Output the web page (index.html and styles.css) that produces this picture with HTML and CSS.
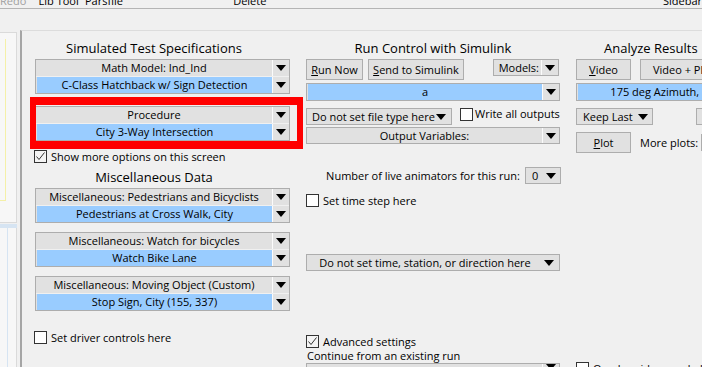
FILE: index.html
```html
<!DOCTYPE html>
<html lang="en">
<head>
    <meta charset="UTF-8">
    <title>Run Screen</title>
    <link rel="stylesheet" href="styles.css">
</head>
<body>
    <div class="menubar">
        <span class="menu-item menu-redo">Redo</span>
        <span class="menu-item menu-lib">Lib Tool</span>
        <span class="menu-item menu-pars">Parsfile</span>
        <span class="menu-item menu-delete">Delete</span>
        <span class="menu-item">Sidebar</span>
    </div>
    <div class="toolbar"></div>

    <div class="workspace">
        <div class="side-panel">
            <div class="side-top"><div class="side-note"></div></div>
            <div class="side-split"></div>
            <div class="side-bottom"></div>
        </div>

        <div class="main">
            <!-- Simulated test specifications -->
            <section class="col col-spec">
                <h2 class="col-title">Simulated Test Specifications</h2>
                <div class="stack">
                    <div class="stack-row"><span class="stack-text">Math Model: Ind_Ind</span><span class="arrow-cell"><i class="arrow"></i></span></div>
                    <div class="stack-row value"><span class="stack-text">C-Class Hatchback w/ Sign Detection</span><span class="arrow-cell"><i class="arrow"></i></span></div>
                </div>
                <div class="highlight">
                    <div class="stack">
                        <div class="stack-row"><span class="stack-text">Procedure</span><span class="arrow-cell"><i class="arrow"></i></span></div>
                        <div class="stack-row value"><span class="stack-text">City 3-Way Intersection</span><span class="arrow-cell"><i class="arrow"></i></span></div>
                    </div>
                </div>
                <label class="check check-more">
                    <span class="box on"><svg width="11" height="11" viewBox="0 0 11 11"><polyline points="1.5,5.5 4,8.5 9.5,1.5" fill="none" stroke="#333" stroke-width="1"/></svg></span>
                    Show more options on this screen
                </label>

                <h2 class="col-title misc-title">Miscellaneous Data</h2>
                <div class="stack">
                    <div class="stack-row"><span class="stack-text">Miscellaneous: Pedestrians and Bicyclists</span><span class="arrow-cell"><i class="arrow"></i></span></div>
                    <div class="stack-row value"><span class="stack-text">Pedestrians at Cross Walk, City</span><span class="arrow-cell"><i class="arrow"></i></span></div>
                </div>
                <div class="stack misc">
                    <div class="stack-row"><span class="stack-text">Miscellaneous: Watch for bicycles</span><span class="arrow-cell"><i class="arrow"></i></span></div>
                    <div class="stack-row value"><span class="stack-text">Watch Bike Lane</span><span class="arrow-cell"><i class="arrow"></i></span></div>
                </div>
                <div class="stack misc">
                    <div class="stack-row"><span class="stack-text">Miscellaneous: Moving Object (Custom)</span><span class="arrow-cell"><i class="arrow"></i></span></div>
                    <div class="stack-row value"><span class="stack-text">Stop Sign, City (155, 337)</span><span class="arrow-cell"><i class="arrow"></i></span></div>
                </div>
                <label class="check check-driver"><span class="box"></span>Set driver controls here</label>
            </section>

            <!-- Run control -->
            <section class="col col-run">
                <h2 class="col-title">Run Control with Simulink</h2>
                <div class="button-row">
                    <button class="btn btn-run"><u>R</u>un Now</button>
                    <button class="btn btn-send"><u>S</u>end to Simulink</button>
                    <div class="split models"><span class="split-text">Models:</span><span class="arrow-cell"><i class="arrow"></i></span></div>
                </div>
                <div class="split value tall model-pick"><span class="split-text">a</span><span class="arrow-cell"><i class="arrow"></i></span></div>
                <div class="file-row">
                    <div class="drop file-type"><span>Do not set file type here</span><i class="arrow"></i></div>
                    <label class="check check-write"><span class="box"></span>Write all outputs</label>
                </div>
                <div class="split outputs"><span class="split-text">Output Variables:</span><span class="arrow-cell"><i class="arrow"></i></span></div>
                <div class="live-row">
                    <span>Number of live animators for this run:</span>
                    <div class="drop live-count"><span>0</span><i class="arrow"></i></div>
                </div>
                <label class="check check-step"><span class="box"></span>Set time step here</label>
                <div class="drop centered time-drop"><span>Do not set time, station, or direction here</span><i class="arrow"></i></div>
                <label class="check check-adv">
                    <span class="box on"><svg width="11" height="11" viewBox="0 0 11 11"><polyline points="1.5,5.5 4,8.5 9.5,1.5" fill="none" stroke="#333" stroke-width="1"/></svg></span>
                    Advanced settings
                </label>
                <div class="continue">Continue from an existing run</div>
                <div class="split continue-pick"><span class="split-text"></span><span class="arrow-cell"><i class="arrow"></i></span></div>
            </section>

            <!-- Analyze results -->
            <section class="col col-analyze">
                <h2 class="col-title analyze-title">Analyze Results</h2>
                <div class="button-row">
                    <button class="btn btn-video"><u>V</u>ideo</button>
                    <button class="btn btn-video-plot">Video + Plots</button>
                </div>
                <div class="split value tall view-pick"><span class="split-text">175 deg Azimuth, 5 deg Elevation</span><span class="arrow-cell"><i class="arrow"></i></span></div>
                <div class="keep-row">
                    <div class="drop keep-last"><span>Keep Last</span><i class="arrow"></i></div>
                    <div class="drop keep-extra"><span></span></div>
                </div>
                <div class="plot-row">
                    <button class="btn btn-plot"><u>P</u>lot</button>
                    <span>More plots:</span>
                    <div class="drop more-plots"><span></span></div>
                </div>
                <label class="check check-overlay"><span class="box"></span>Overlay videos and plots</label>
            </section>
        </div>
    </div>
</body>
</html>
```

FILE: styles.css
```css
/* Windows-style run screen */
body {
    margin: 0;
    width: 702px;
    height: 367px;
    overflow: hidden;
    background-color: #f0f0f0;
    font-family: "Open Sans", "Noto Sans", sans-serif;
    font-size: 11px;
    color: #000;
}

/* menu strip, scrolled so only the bottom of the labels shows */
.menubar {
    display: flex;
    height: 8px;
    overflow: hidden;
    border-bottom: 1px solid #b4b4b4;
}

.menu-item {
    line-height: 12px;
    margin-top: -5px;
    white-space: nowrap;
}

.menu-redo { width: 39px; color: #a0a0a0; }
.menu-lib { width: 47px; }
.menu-pars { width: 150px; }
.menu-delete { width: 435px; }

.toolbar {
    height: 21px;
}

.workspace {
    display: flex;
    height: 337px;
}

/* left list panels */
.side-panel {
    width: 17px;
    margin-right: 3px;
    padding-top: 2px;
    display: flex;
    flex-direction: column;
}

.side-top {
    height: 183px;
    background-color: #f7f7f7;
    border: 1px solid #dadada;
    border-left: 0;
    padding-top: 6px;
}

.side-note {
    width: 5px;
    height: 161px;
    border-right: 1px solid #f4f0a8;
    border-bottom: 1px solid #f4f0a8;
}

.side-split {
    height: 4px;
    margin-top: 1px;
    background-color: #d6e4f2;
}

.side-bottom {
    flex: 1;
    background-color: #f7f7f7;
    border-right: 1px solid #dadada;
}

.side-bottom::before {
    content: "";
    display: block;
    width: 7px;
    height: 100%;
    border-right: 1px solid #d6e4f2;
}

.main {
    flex: 1;
    display: flex;
    gap: 16px;
    padding: 7px 0 0 13px;
    border-left: 2px solid #a5a5a5;
    border-top: 1px solid #dcdcdc;
    overflow: hidden;
}

.col {
    flex: none;
    display: flex;
    flex-direction: column;
    align-items: stretch;
}

.col-spec { width: 255px; }
.col-run { width: 254px; }
.col-analyze { width: 254px; }

.col-title {
    margin: 0 0 1px;
    height: 20px;
    line-height: 20px;
    font-size: 13px;
    font-weight: normal;
    text-align: center;
    white-space: nowrap;
}

.col-spec .col-title {
    padding-right: 17px;
}

.analyze-title {
    text-align: left;
    padding-left: 28px;
}

/* two-row combo: caption row over value row */
.stack {
    border: 1px solid #adadad;
    background-color: #e1e1e1;
}

.stack-row {
    display: flex;
    height: 16px;
}

.stack-row + .stack-row {
    border-top: 1px solid #f0f0f0;
}

.stack-text {
    flex: 1;
    line-height: 16px;
    text-align: center;
    white-space: nowrap;
    overflow: hidden;
}

.value .stack-text,
.value .split-text {
    background-color: #99ccff;
    margin-left: 1px;
}

.arrow-cell {
    width: 16px;
    flex: none;
    border-left: 1px solid #fbfbfb;
    display: flex;
    align-items: center;
    justify-content: center;
}

.arrow {
    display: block;
    width: 0;
    height: 0;
    border-left: 5px solid transparent;
    border-right: 5px solid transparent;
    border-top: 6px solid #000;
}

.highlight {
    margin: 3px -13px 0 -5px;
    padding: 1px 7px 0 0;
    border-style: solid;
    border-color: #ff0000;
    border-width: 8px 6px;
}

.highlight .stack {
    border-left: 0;
}

.misc {
    margin-top: 9px;
}

/* checkboxes */
.check {
    display: flex;
    align-items: center;
    gap: 4px;
    height: 13px;
    line-height: 13px;
    white-space: nowrap;
}

.box {
    flex: none;
    box-sizing: border-box;
    width: 13px;
    height: 13px;
    border: 1px solid #333;
    background-color: #fff;
    display: flex;
    align-items: center;
    justify-content: center;
}

.box.on {
    background-color: #f4f4f4;
}

.check-more { margin: 1px 0 0 -1px; }
.misc-title { margin-top: 4px; }
.check-driver { margin: 20px 0 0 -1px; }

/* buttons and single-row combos */
.btn {
    height: 21px;
    padding: 0;
    border: 1px solid #adadad;
    background-color: #e1e1e1;
    font-family: inherit;
    font-size: 11px;
    color: #000;
    white-space: nowrap;
}

.button-row {
    display: flex;
    align-items: flex-start;
    gap: 5px;
}

.btn-run { width: 57px; }
.btn-send { width: 96px; }

.split {
    display: flex;
    height: 15px;
    border: 1px solid #adadad;
    background-color: #e1e1e1;
}

.split.tall {
    height: 16px;
}

.split-text {
    flex: 1;
    text-align: center;
    line-height: 15px;
    white-space: nowrap;
    overflow: hidden;
}

.tall .split-text {
    line-height: 16px;
}

.models {
    width: 64px;
    margin-left: auto;
    margin-right: 1px;
}

.models .split-text {
    text-align: right;
    padding-right: 2px;
}

.model-pick { margin-top: 3px; }

.drop {
    display: flex;
    align-items: center;
    justify-content: space-between;
    box-sizing: border-box;
    height: 17px;
    padding: 0 5px 0 5px;
    border: 1px solid #adadad;
    background-color: #e1e1e1;
    white-space: nowrap;
}

.drop.centered span {
    flex: 1;
    text-align: center;
}

.drop.centered .arrow {
    margin-left: 6px;
}

.file-row {
    display: flex;
    align-items: flex-start;
    gap: 8px;
    margin-top: 7px;
}

.file-type { width: 146px; }

.check-write {
    gap: 2px;
    line-height: 11px;
    align-items: flex-start;
}

.outputs { margin-top: 2px; }

.live-row {
    display: flex;
    align-items: center;
    justify-content: flex-end;
    gap: 5px;
    margin: 23px -1px 0 0;
}

.live-count {
    width: 36px;
    padding: 0 4px 0 6px;
}

.check-step { margin-top: 10px; }
.time-drop { margin-top: 47px; }
.check-adv { margin-top: 64px; }

.continue {
    line-height: 13px;
    margin-top: 1px;
    padding-left: 1px;
}

.continue-pick { margin-top: 1px; }

/* analyze column */
.btn-video { width: 55px; }
.btn-video-plot { width: 92px; margin-left: 4px; }

.view-pick { margin-top: 3px; }

.keep-row {
    display: flex;
    gap: 43px;
    margin-top: 7px;
}

.keep-last { width: 77px; padding: 0 4px 0 6px; }
.keep-extra { width: 60px; }

.plot-row {
    display: flex;
    align-items: center;
    gap: 9px;
    margin-top: 7px;
}

.btn-plot { width: 55px; }

.more-plots {
    width: 60px;
    margin-left: -6px;
}

.check-overlay { margin-top: 209px; }
```
